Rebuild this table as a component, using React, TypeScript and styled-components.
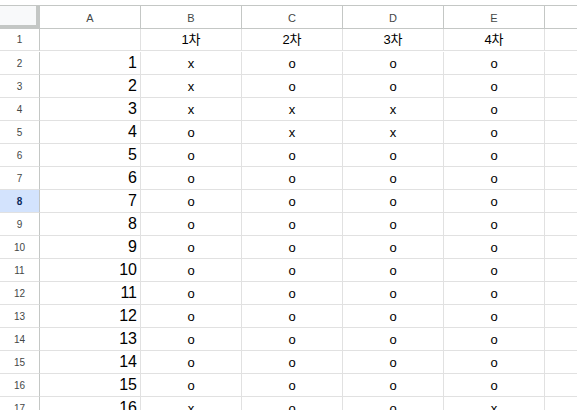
import React from 'react';
import styled, { createGlobalStyle } from 'styled-components';

const GlobalStyle = createGlobalStyle`
  html, body {
    margin: 0;
    padding: 0;
    background: #ffffff;
    overflow: hidden;
  }
  body {
    font-family: "Liberation Sans", Arial, "Noto Sans CJK KR", sans-serif;
  }
`;

const Sheet = styled.div`
  margin-top: 5px;
  border-top: 1px solid #c4c7c5;
  display: grid;
  grid-template-columns: 40px repeat(6, 101px);
  grid-auto-rows: 23px;
  width: 577px;
  height: 405px;
  overflow: hidden;
`;

const Corner = styled.div`
  box-sizing: border-box;
  background: #f8f9fa;
  border-right: 4px solid #c4c7c5;
  border-bottom: 4px solid #c4c7c5;
  height: 23px;
`;

const ColHeader = styled.div`
  box-sizing: border-box;
  height: 23px;
  border-right: 1px solid #c4c7c5;
  border-bottom: 1px solid #c4c7c5;
  display: flex;
  align-items: center;
  justify-content: center;
  font-size: 11px;
  color: #444746;
  padding-top: 1px;
`;

const RowHeader = styled.div<{ $selected?: boolean; $short?: boolean }>`
  box-sizing: border-box;
  height: ${p => (p.$short ? 22 : 23)}px;
  border-right: 1px solid #c4c7c5;
  border-bottom: 1px solid #e1e1e1;
  background: ${p => (p.$selected ? '#d3e3fd' : '#ffffff')};
  color: ${p => (p.$selected ? '#0b2a5c' : '#444746')};
  font-weight: ${p => (p.$selected ? 700 : 400)};
  font-size: 10px;
  display: flex;
  align-items: center;
  justify-content: center;
`;

const Cell = styled.div<{ $align: 'left' | 'center' | 'right'; $big?: boolean; $short?: boolean }>`
  box-sizing: border-box;
  height: ${p => (p.$short ? 22 : 23)}px;
  border-right: 1px solid #e1e1e1;
  border-bottom: 1px solid #e1e1e1;
  display: flex;
  align-items: flex-end;
  justify-content: ${p => (p.$align === 'right' ? 'flex-end' : p.$align === 'center' ? 'center' : 'flex-start')};
  padding: 0 3px 2px 3px;
  font-size: ${p => (p.$big ? 16 : 13)}px;
  line-height: ${p => (p.$big ? 18 : 16)}px;
  color: #000000;
  white-space: nowrap;
  overflow: hidden;
`;

const columns = ['A', 'B', 'C', 'D', 'E', ''];

const B = 'xxxooooooooooooxxo';
const C = 'ooxxoooooooooooooo';
const D = 'ooxxoooooooooooooo';
const E = 'oooooooooooooooxoo';

const App: React.FC = () => {
  const rows = Array.from({ length: 18 }, (_, i) => i + 1);

  return (
    <>
      <GlobalStyle />
      <Sheet>
        <Corner />
        {columns.map((c, i) => (
          <ColHeader key={i}>{c}</ColHeader>
        ))}
        {rows.map(r => {
          const short = r === 1;
          const i = r - 2;
          const cells =
            r === 1
              ? ['', '1차', '2차', '3차', '4차', '']
              : [String(r - 1), B[i], C[i], D[i], E[i], ''];
          return (
            <React.Fragment key={r}>
              <RowHeader $selected={r === 8} $short={short}>{r}</RowHeader>
              {cells.map((v, ci) => (
                <Cell
                  key={ci}
                  $short={short}
                  $align={ci === 0 ? 'right' : 'center'}
                  $big={ci === 0}
                >
                  {v}
                </Cell>
              ))}
            </React.Fragment>
          );
        })}
      </Sheet>
    </>
  );
};

export default App;
